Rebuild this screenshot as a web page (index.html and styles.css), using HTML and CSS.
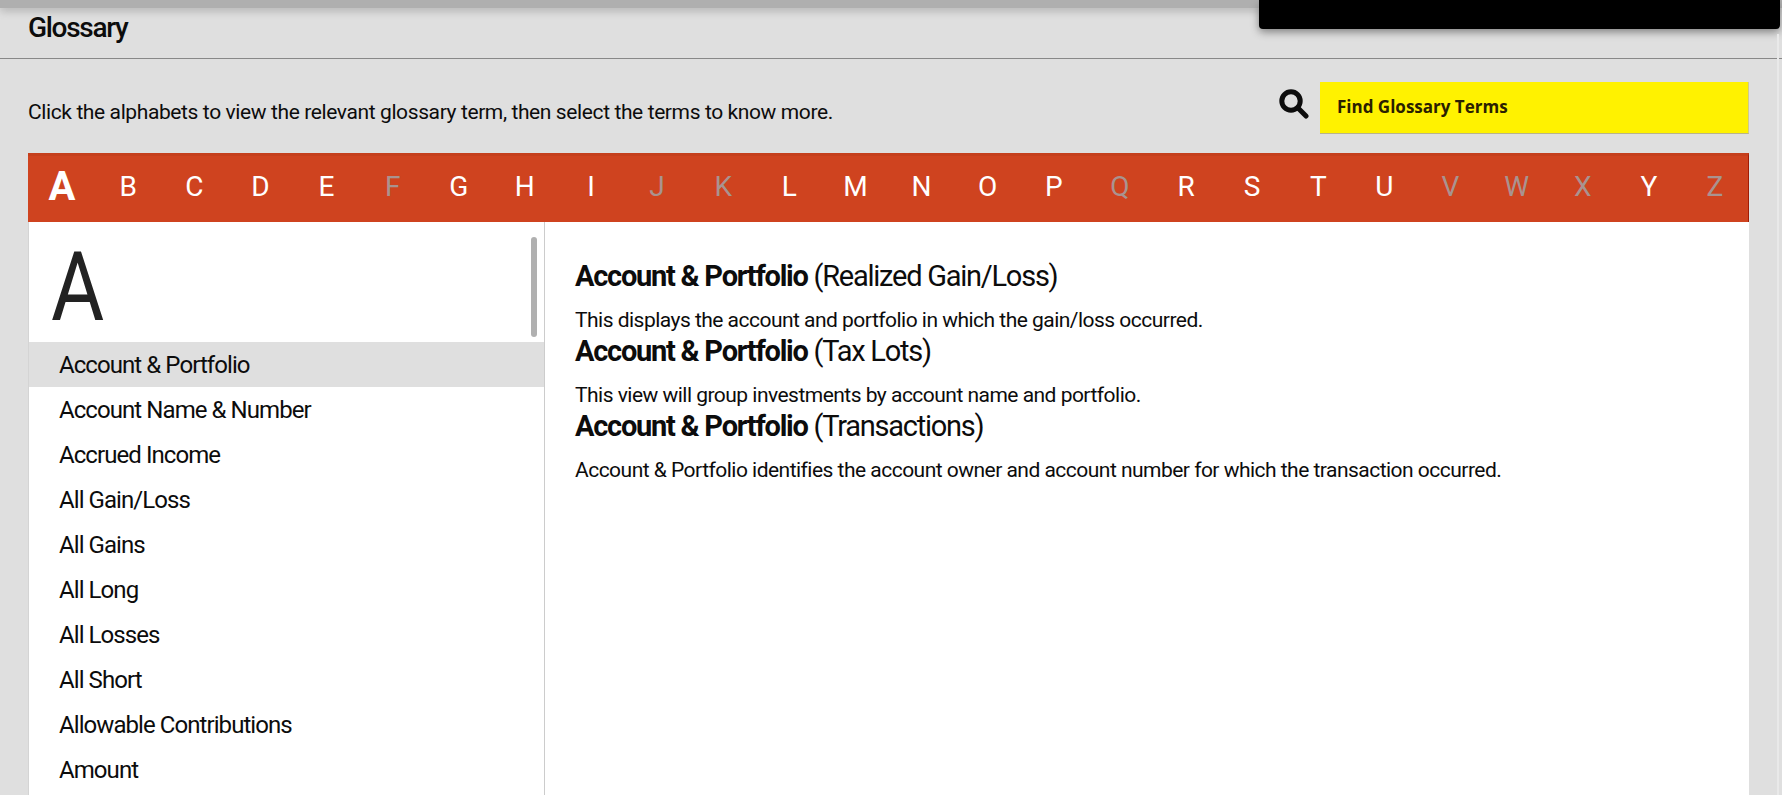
FILE: index.html
```html
<html><head>
<meta name="viewport" content="width=device-width, initial-scale=1">
<link rel="stylesheet" href="styles.css"></head><body>

<div class="topband"></div>
<div class="blackbox"></div>
<div class="edge"></div>

<div class="header"><h1>Glossary</h1></div>

<div class="page">
  <div class="intro">
    <p>Click the alphabets to view the relevant glossary term, then select the terms to know more.</p>
    <div class="search">
      <svg class="searchIcon" viewBox="0 0 30 30"><circle cx="12" cy="12" r="9.2" fill="none" stroke="#0d0d0d" stroke-width="5"/><path d="M19 19l8 8" stroke="#0d0d0d" stroke-width="5" stroke-linecap="round"/></svg>
      <div class="searchBox">Find Glossary Terms</div>
    </div>
  </div>

  <div class="letters">
    <a class="current">A</a><a>B</a><a>C</a><a>D</a><a>E</a><a class="off">F</a><a>G</a><a>H</a><a>I</a><a class="off">J</a><a class="off">K</a><a>L</a><a>M</a>
    <a>N</a><a>O</a><a>P</a><a class="off">Q</a><a>R</a><a>S</a><a>T</a><a>U</a><a class="off">V</a><a class="off">W</a><a class="off">X</a><a>Y</a><a class="off">Z</a>
  </div>

  <div class="panel">
    <div class="terms">
      <div class="thumb"></div>
      <div class="bigLetter"><span>A</span></div>
      <div class="term selected">Account &amp; Portfolio</div>
      <div class="term">Account Name &amp; Number</div>
      <div class="term">Accrued Income</div>
      <div class="term">All Gain/Loss</div>
      <div class="term">All Gains</div>
      <div class="term">All Long</div>
      <div class="term">All Losses</div>
      <div class="term">All Short</div>
      <div class="term">Allowable Contributions</div>
      <div class="term">Amount</div>
    </div>
    <div class="detail">
      <h3><b>Account &amp; Portfolio</b> (Realized Gain/Loss)</h3>
      <p>This displays the account and portfolio in which the gain/loss occurred.</p>
      <h3><b>Account &amp; Portfolio</b> (Tax Lots)</h3>
      <p>This view will group investments by account name and portfolio.</p>
      <h3><b>Account &amp; Portfolio</b> (Transactions)</h3>
      <p>Account &amp; Portfolio identifies the account owner and account number for which the transaction occurred.</p>
    </div>
  </div>
</div>

</body></html>
```

FILE: styles.css
```css
html, body {height: 795px; overflow: hidden;}
body {margin: 0; background-color: #dfdfdf; color: #0c0c0c; font-family: Roboto, Arial, sans-serif;}

.topband {
  height: 8px;
  background-color: #afafaf;
  box-shadow: 0 3px 8px #b0b0b0;
}
.blackbox {
  position: absolute;
  top: 0;
  right: 2px;
  width: 521px;
  height: 29px;
  background-color: #000;
  border-radius: 0 0 4px 4px;
  box-shadow: 0 3px 8px #808080;
}
.edge {
  position: absolute;
  top: 34px;
  bottom: 0;
  right: 3px;
  width: 2px;
  background-color: #e9e9e9;
}

.header {height: 46px; padding: 4px 0 0 28px; border-bottom: 1px solid #888;}
.header h1 {margin: 0; font-size: 28px; font-weight: 500; line-height: 32px; letter-spacing: -1.3px;}

.page {padding: 0 33px 0 28px;}

.intro {display: flex; justify-content: space-between; height: 94px;}
.intro p {margin: 0; padding-top: 40px; font-size: 21px; line-height: 26px; letter-spacing: -0.39px;}
.search {display: flex; align-items: flex-start; padding-top: 23px;}
.searchIcon {width: 30px; height: 30px; margin: 7px 11px 0 0;}
.searchBox {
  box-sizing: border-box;
  width: 429px;
  height: 52px;
  padding: 0 17px;
  background-color: #fff200;
  border-bottom: 1px solid #b9b48a;
  border-right: 1px solid #cfca8c;
  color: #2a2000;
  font-family: "Open Sans", Arial, sans-serif;
  font-size: 17px;
  font-weight: 700;
  line-height: 50px;
}

.letters {
  display: grid;
  grid-template-columns: repeat(26, 1fr);
  align-items: center;
  height: 69px;
  padding: 0 0 5px 1px;
  background-color: #cf431f;
  border-top: 3px solid #c53f1c;
  border-right: 1px solid #a01c05;
  box-sizing: border-box;
}
.letters a {color: #fff; font-size: 28px; text-align: center;}
.letters a.off {color: #a9938f;}
.letters a.current {font-size: 40px; font-weight: 700;}

.panel {display: flex; height: 573px; background-color: #fff;}

.terms {position: relative; width: 515px; border-left: 1px solid #d4d4d4; border-right: 1px solid #ccc; overflow: hidden;}
.thumb {
  position: absolute;
  top: 15px;
  right: 7px;
  width: 6px;
  height: 100px;
  background-color: #b0b0b0;
  border-radius: 3px;
}
.bigLetter {height: 120px; padding-left: 22px; font-size: 96px; line-height: 130px; color: #222;}
.bigLetter span {display: inline-block; transform: scaleX(0.85); transform-origin: left;}
.term {height: 45px; padding-left: 30px; font-size: 24px; line-height: 46px; letter-spacing: -0.93px;}
.term.selected {background-color: #dfdfdf;}

.detail {padding: 36px 30px 0 30px;}
.detail h3 {margin: 0; font-size: 29px; font-weight: 400; line-height: 36px; letter-spacing: -1.25px;}
.detail h3 b {font-weight: 700;}
.detail p {margin: 0; padding-top: 13px; font-size: 21px; line-height: 26px; letter-spacing: -0.52px;}
```
